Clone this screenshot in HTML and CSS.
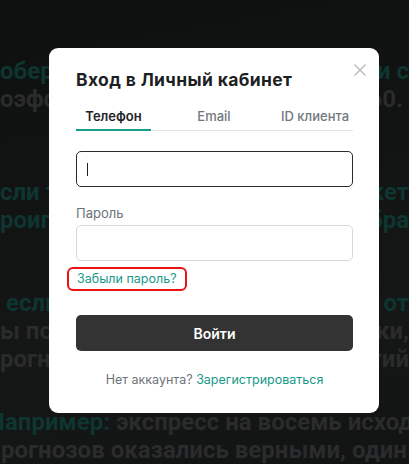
FILE: index.html
```html
<!DOCTYPE html>
<html lang="ru">
<head>
<meta charset="utf-8">
<title>Вход в Личный кабинет</title>
<link rel="stylesheet" href="styles.css">
</head>
<body>
<div class="page">
  <div class="para p1">
    <div class="ln teal"><span>обери</span><span>ти с</span></div>
    <div class="ln"><span>оэфф</span><span class="end">60.</span></div>
  </div>
  <div class="para p2">
    <div class="ln teal"><span>сли т</span><span>кет</span></div>
    <div class="ln teal"><span>роиг</span><span>бра</span></div>
  </div>
  <div class="para p3">
    <div class="ln teal"><span class="lead-a">А если</span><span>т от</span></div>
    <div class="ln"><span>ы по</span><span>ки,</span></div>
    <div class="ln"><span>рогн</span><span>тий</span></div>
  </div>
  <div class="para p4">
    <div class="ln"><span class="lead-n"><span class="tealtext">Например:</span> экспресс на восемь исходов</span></div>
    <div class="ln"><span class="lead-p">рогнозов оказались верными, один</span></div>
  </div>
</div>

<div class="modal">
  <button class="close" aria-label="Закрыть">
    <svg width="12" height="12" viewBox="0 0 12 12"><path d="M0.5 0.5L11.5 11.5M11.5 0.5L0.5 11.5" stroke="#b4b9be" stroke-width="1.3" fill="none"/></svg>
  </button>
  <h1 class="title">Вход в Личный кабинет</h1>
  <div class="tabs">
    <div class="tab active">Телефон</div>
    <div class="tab">Email</div>
    <div class="tab">ID клиента</div>
  </div>
  <div class="field focused"><span class="caret"></span></div>
  <div class="label">Пароль</div>
  <div class="field"></div>
  <a class="forgot" href="#">Забыли пароль?</a>
  <button class="submit">Войти</button>
  <p class="footer">Нет аккаунта? <a href="#">Зарегистрироваться</a></p>
</div>
</body>
</html>
```
FILE: styles.css
```css
html, body {
  margin: 0;
  padding: 0;
}
body {
  width: 409px;
  height: 464px;
  overflow: hidden;
  background: linear-gradient(170deg, #0e0f0f 0%, #121313 40%, #151616 70%, #121313 100%);
  font-family: Inter, "Noto Sans", sans-serif;
  position: relative;
}
.page {
  padding-top: 57px;
  font-family: Roboto, sans-serif;
  font-weight: 700;
  font-size: 24px;
  line-height: 28px;
  color: #2a2b2c;
  white-space: nowrap;
  overflow: hidden;
}
.para { display: flex; flex-direction: column; }
.p2 { margin-top: 65px; }
.p3 { margin-top: 55px; }
.p4 { margin-top: 35px; }
.ln {
  display: flex;
  justify-content: space-between;
  overflow: hidden;
}
.teal, .tealtext { color: #0e3530; }
.end { margin-right: 6px; }
.lead-a { margin-left: -16px; }
.lead-n { margin-left: -12px; }
.lead-p { margin-left: 1px; }

.modal {
  position: absolute;
  left: 49px;
  top: 48px;
  width: 330px;
  box-sizing: border-box;
  padding: 20px 26px 25px 27px;
  background: #ffffff;
  border-radius: 9px;
  display: flex;
  flex-direction: column;
}
.close {
  position: absolute;
  top: 16px;
  right: 13px;
  width: 12px;
  height: 12px;
  padding: 0;
  border: 0;
  background: none;
  display: block;
}
.close svg { display: block; }
.title {
  margin: 0;
  font-size: 17.5px;
  line-height: 24px;
  font-weight: 700;
  color: #1e1f23;
  letter-spacing: 0.35px;
}
.tabs {
  margin-top: 12px;
  display: grid;
  grid-template-columns: 75px 1fr 76px;
  border-bottom: 1px solid #dfe4ea;
}
.tab {
  text-align: center;
  font-size: 13px;
  line-height: 16px;
  padding: 4px 0 5px;
  color: #72777d;
  font-weight: 500;
  margin-bottom: -1px;
  border-bottom: 2px solid transparent;
}
.tab.active {
  color: #222326;
  font-weight: 600;
  border-bottom-color: #16a08a;
}
.field {
  height: 36px;
  box-sizing: border-box;
  border: 1px solid #d3d9e1;
  border-radius: 5px;
  padding-left: 10px;
  display: flex;
  align-items: center;
}
.field.focused {
  margin-top: 20px;
  border-color: #2a2b2d;
}
.caret {
  width: 1px;
  height: 13px;
  background: #1e1f22;
}
.label {
  margin-top: 18px;
  margin-bottom: 4px;
  font-size: 13px;
  line-height: 16px;
  color: #6d7278;
}
.forgot {
  align-self: flex-start;
  margin: 6px 0 0 -9px;
  padding: 2px 8px;
  border: 2px solid #ee1111;
  border-radius: 6px;
  font-size: 12.5px;
  line-height: 16px;
  color: #17998a;
  text-decoration: none;
}
.submit {
  margin-top: 24px;
  height: 36px;
  border: 0;
  border-radius: 5px;
  background: #333333;
  color: #ffffff;
  font-family: inherit;
  font-size: 14px;
  font-weight: 600;
}
.footer {
  margin: 21px 0 0;
  text-align: center;
  font-size: 12.5px;
  line-height: 16px;
  color: #6d7278;
}
.footer a {
  color: #17998a;
  text-decoration: none;
}
```
